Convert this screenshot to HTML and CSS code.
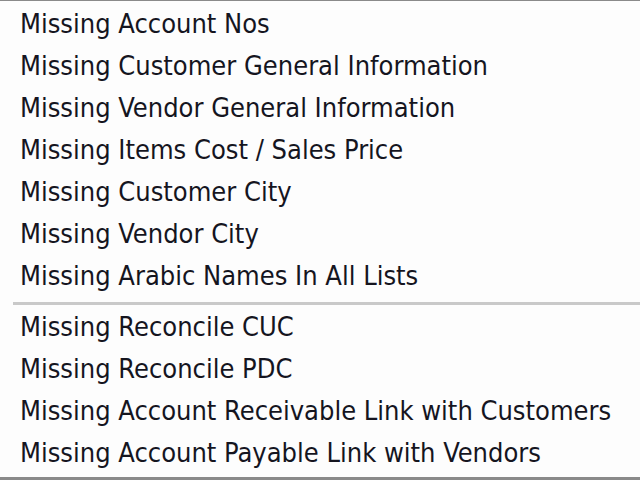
FILE: index.html
```html
<!DOCTYPE html>
<html>
<head>
<meta charset="utf-8">
<link rel="stylesheet" href="styles.css">
</head>
<body>
<div class="menu">
  <div class="item">Missing Account Nos</div>
  <div class="item">Missing Customer General Information</div>
  <div class="item">Missing Vendor General Information</div>
  <div class="item">Missing Items Cost / Sales Price</div>
  <div class="item">Missing Customer City</div>
  <div class="item">Missing Vendor City</div>
  <div class="item">Missing Arabic Names In All Lists</div>
  <div class="sep"></div>
  <div class="item">Missing Reconcile CUC</div>
  <div class="item">Missing Reconcile PDC</div>
  <div class="item">Missing Account Receivable Link with Customers</div>
  <div class="item">Missing Account Payable Link with Vendors</div>
</div>
</body>
</html>
```
FILE: styles.css
```css
html, body {
  margin: 0;
  padding: 0;
  background: #fdfdfd;
}
.menu {
  width: 640px;
  height: 480px;
  box-sizing: border-box;
  border-top: 1px solid #8a8a8a;
  border-bottom: 3px solid #8a8a8a;
  padding-top: 2px;
  background: #fdfdfd;
  display: flex;
  flex-direction: column;
  font-family: "DejaVu Sans Condensed", "DejaVu Sans", sans-serif;
  font-size: 27px;
  color: #15151f;
}
.item {
  height: 42px;
  line-height: 42px;
  padding-left: 20px;
  white-space: nowrap;
}
.sep {
  height: 3px;
  margin: 5px 0 1px 13px;
  background: #c9c9c9;
}
```
